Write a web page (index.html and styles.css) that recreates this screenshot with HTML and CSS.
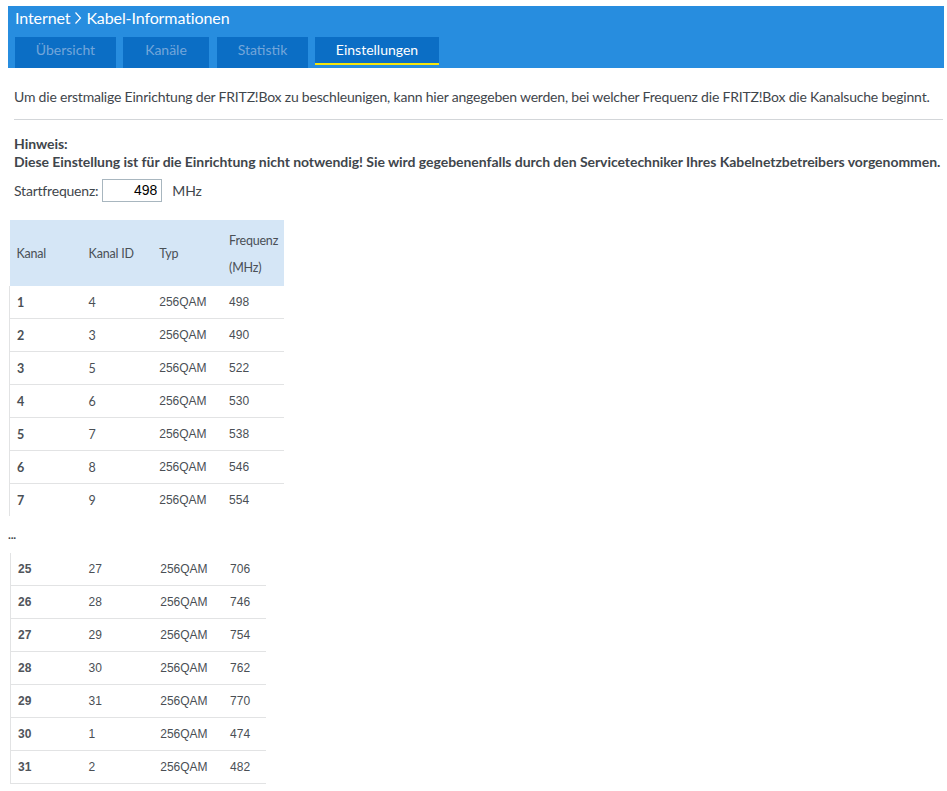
FILE: index.html
```html
<!DOCTYPE html>
<html lang="de">
<head>
<meta charset="utf-8">
<title>Kabel-Informationen</title>
<link rel="stylesheet" href="styles.css">
</head>
<body>
<header class="bar">
  <div class="crumb">
    <span>Internet</span>
    <svg class="chev" width="8" height="14" viewBox="0 0 8 14"><path d="M1.5 1.5 L6.5 7 L1.5 12.5" fill="none" stroke="#fff" stroke-width="1.2"/></svg>
    <span>Kabel-Informationen</span>
  </div>
  <nav class="tabs">
    <a class="tab t1">Übersicht</a>
    <a class="tab t2">Kanäle</a>
    <a class="tab t3">Statistik</a>
    <a class="tab t4 active">Einstellungen</a>
  </nav>
</header>
<main class="content">
  <p class="intro">Um die erstmalige Einrichtung der FRITZ!Box zu beschleunigen, kann hier angegeben werden, bei welcher Frequenz die FRITZ!Box die Kanalsuche beginnt.</p>
  <hr class="rule">
  <p class="note">Hinweis:<br>Diese Einstellung ist für die Einrichtung nicht notwendig! Sie wird gegebenenfalls durch den Servicetechniker Ihres Kabelnetzbetreibers vorgenommen.</p>
  <div class="freq">
    <label>Startfrequenz:</label>
    <input class="freq-input" type="text" value="498">
    <span class="unit">MHz</span>
  </div>
  <table class="ch ch1">
    <thead>
      <tr><th class="c1">Kanal</th><th class="c2">Kanal ID</th><th class="c3">Typ</th><th class="c4">Frequenz<br>(MHz)</th></tr>
    </thead>
    <tbody>
      <tr><td class="c1">1</td><td class="c2">4</td><td class="c3">256QAM</td><td class="c4">498</td></tr>
      <tr><td class="c1">2</td><td class="c2">3</td><td class="c3">256QAM</td><td class="c4">490</td></tr>
      <tr><td class="c1">3</td><td class="c2">5</td><td class="c3">256QAM</td><td class="c4">522</td></tr>
      <tr><td class="c1">4</td><td class="c2">6</td><td class="c3">256QAM</td><td class="c4">530</td></tr>
      <tr><td class="c1">5</td><td class="c2">7</td><td class="c3">256QAM</td><td class="c4">538</td></tr>
      <tr><td class="c1">6</td><td class="c2">8</td><td class="c3">256QAM</td><td class="c4">546</td></tr>
      <tr><td class="c1">7</td><td class="c2">9</td><td class="c3">256QAM</td><td class="c4">554</td></tr>
    </tbody>
  </table>
  <div class="dots">...</div>
  <table class="ch ch2">
    <tbody>
      <tr><td class="c1">25</td><td class="c2">27</td><td class="c3">256QAM</td><td class="c4">706</td></tr>
      <tr><td class="c1">26</td><td class="c2">28</td><td class="c3">256QAM</td><td class="c4">746</td></tr>
      <tr><td class="c1">27</td><td class="c2">29</td><td class="c3">256QAM</td><td class="c4">754</td></tr>
      <tr><td class="c1">28</td><td class="c2">30</td><td class="c3">256QAM</td><td class="c4">762</td></tr>
      <tr><td class="c1">29</td><td class="c2">31</td><td class="c3">256QAM</td><td class="c4">770</td></tr>
      <tr><td class="c1">30</td><td class="c2">1</td><td class="c3">256QAM</td><td class="c4">474</td></tr>
      <tr><td class="c1">31</td><td class="c2">2</td><td class="c3">256QAM</td><td class="c4">482</td></tr>
    </tbody>
  </table>
</main>
</body>
</html>
```
FILE: styles.css
```css
html, body {
  background: #fff;
}
body {
  margin: 6px 3px 0 8px;
  font-family: Lato, "Noto Sans", sans-serif;
  font-size: 14px;
  letter-spacing: -0.2px;
  color: #3f464c;
}
.bar {
  background: #278ddf;
  padding: 2px 7px 0 7px;
  height: 60px;
}
.crumb {
  display: flex;
  align-items: center;
  gap: 4px;
  height: 20px;
  line-height: 20px;
  font-size: 16px;
  letter-spacing: -0.1px;
  color: #fff;
}
.chev {
  display: block;
  margin-top: -1px;
}
.tabs {
  display: flex;
  gap: 7px;
  margin-top: 9px;
}
.tab {
  display: block;
  height: 26px;
  padding-bottom: 5px;
  line-height: 26px;
  text-align: center;
  background: #0b6ec5;
  color: #73a6da;
  font-size: 14px;
  letter-spacing: 0;
}
.t1 { width: 101px; }
.t2 { width: 86px; }
.t3 { width: 91px; margin-left: 1px; }
.t4 { width: 124px; }
.tab.active {
  color: #fff;
  box-shadow: inset 0 -3px 0 #278ddf, inset 0 -5px 0 #f5e60c;
}
.content {
  padding: 0 1px 0 6px;
}
.intro {
  margin: 20px 0 0 0;
  line-height: 18px;
  white-space: nowrap;
}
.rule {
  margin: 13px 0 0 0;
  border: 0;
  border-top: 1px solid #d3d6d9;
  height: 0;
}
.note {
  margin: 15px 0 0 0;
  line-height: 18px;
  font-weight: bold;
  font-size: 14px;
  letter-spacing: -0.05px;
  white-space: nowrap;
}
.freq {
  display: flex;
  align-items: center;
  margin-top: 7px;
  height: 24px;
}
.freq label {
  margin-right: 4px;
}
.freq-input {
  box-sizing: border-box;
  width: 60px;
  height: 23px;
  border: 1px solid #a8b6bf;
  padding: 0 4px 0 2px;
  text-align: right;
  font-family: "Liberation Sans", Arial, sans-serif;
  font-size: 14px;
  letter-spacing: 0;
  color: #000;
  margin: 0;
}
.unit {
  margin-left: 10px;
}
.ch {
  border-collapse: collapse;
  font-size: 12px;
  letter-spacing: 0;
  color: #4a4f55;
}
.ch1 {
  margin: 18px 0 0 -5px;
  width: 275px;
}
.ch1 th {
  background: #d5e6f6;
  font-weight: normal;
  text-align: left;
  line-height: 27px;
  height: 64px;
  padding: 0 0 0 7px;
  color: #4a5056;
  font-size: 12.5px;
  letter-spacing: -0.2px;
}
.ch1 th.c4 { padding-top: 2px; }
.ch td {
  height: 32px;
  padding: 0 0 0 7px;
  border-bottom: 1px solid #e2e3e4;
  font-family: "Liberation Sans", Arial, sans-serif;
  font-size: 12px;
}
.ch tr td:first-child {
  border-left: 1px solid #e2e3e4;
}
.ch1 td.c1 {
  font-family: Lato, sans-serif;
  font-weight: bold;
  font-size: 12.5px;
}
.ch1 td.c2 {
  font-family: Lato, sans-serif;
  font-size: 12.5px;
}
.ch1 tr:last-child td {
  border-bottom: 0;
}
.ch1 .c1 { width: 65px; }
.ch1 .c2 { width: 64px; }
.ch1 .c3 { width: 63px; }
.ch1 .c4 { width: 55px; }
.dots {
  margin: 9px 0 0 -6px;
  height: 20px;
  line-height: 20px;
  font-weight: bold;
  font-size: 12px;
}
.ch2 {
  margin: 8px 0 0 -4px;
  width: 256px;
}
.ch2 td.c1 { font-weight: bold; color: #50555b; }
.ch2 .c1 { width: 64px; }
.ch2 .c2 { width: 65px; }
.ch2 .c3 { width: 63px; }
.ch2 .c4 { width: 36px; }
```
